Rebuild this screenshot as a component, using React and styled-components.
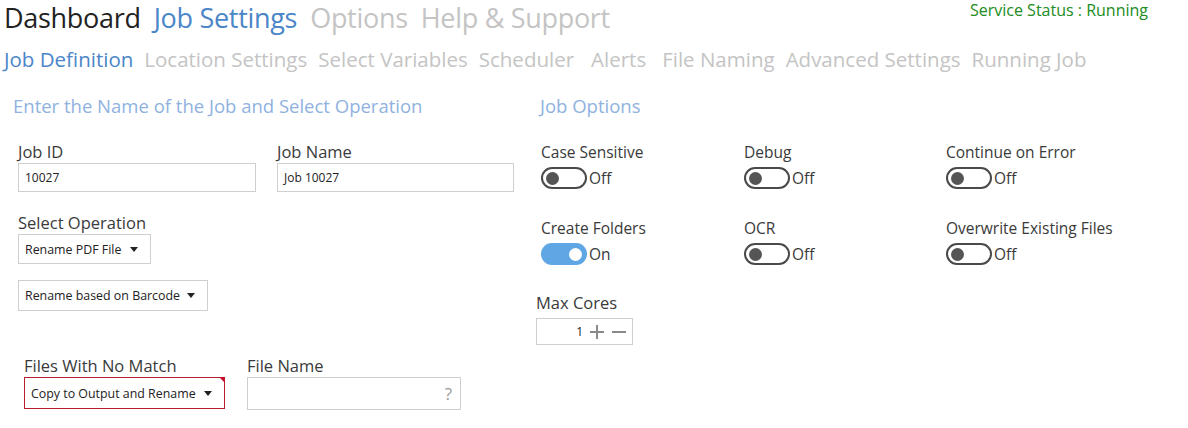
import React from "react";
import styled, { createGlobalStyle } from "styled-components";

const GlobalStyle = createGlobalStyle`
  body {
    margin: 0;
    background: #ffffff;
    font-family: "Open Sans", "Noto Sans", sans-serif;
    color: #333333;
  }
`;

const Page = styled.div`
  width: 1188px;
  height: 428px;
  overflow: hidden;
`;

const Header = styled.div`
  display: flex;
  justify-content: space-between;
  align-items: flex-start;
  height: 40px;
`;

const TopNav = styled.div`
  display: flex;
  gap: 13px;
  padding-left: 4px;
`;

const TopItem = styled.span`
  font-size: 27px;
  line-height: 36px;
  letter-spacing: -0.3px;
  color: ${(p) => (p.active ? "#4a86c8" : p.current ? "#222222" : "#c4c4c4")};
`;

const Status = styled.div`
  color: #218c21;
  font-size: 16px;
  line-height: 20px;
  padding-right: 40px;
`;

const SubNav = styled.div`
  display: flex;
  gap: 11px;
  padding-left: 4px;
  height: 38px;
  align-items: center;
`;

const SubItem = styled.span`
  font-size: 20.5px;
  margin-right: ${(p) => p.extra || 0}px;
  color: ${(p) => (p.active ? "#4a86c8" : "#c4c4c4")};
`;

const Main = styled.div`
  display: flex;
  padding-top: 16px;
`;

const LeftCol = styled.div`
  width: 540px;
  padding-left: 13px;
  box-sizing: border-box;
`;

const RightCol = styled.div`
  flex: 1;
`;

const SectionTitle = styled.div`
  font-size: 18.5px;
  line-height: 24px;
  color: #8fb2e0;
  margin-bottom: ${(p) => p.gap || 0}px;
`;

const FieldRow = styled.div`
  display: flex;
  gap: ${(p) => p.gap || 21}px;
  padding-left: ${(p) => p.indent || 5}px;
  margin-bottom: ${(p) => p.mb || 0}px;
`;

const Field = styled.div`
  display: flex;
  flex-direction: column;
`;

const Label = styled.div`
  font-size: 16.5px;
  line-height: 22px;
  color: #3a3a3a;
`;

const TextBox = styled.div`
  width: ${(p) => p.w}px;
  height: ${(p) => p.h || 29}px;
  box-sizing: border-box;
  border: 1px solid #cfcfcf;
  display: flex;
  align-items: center;
  justify-content: space-between;
  padding: 0 6px;
  font-size: 12px;
  color: #222;
`;

const Help = styled.span`
  font-size: 17px;
  color: #9a9a9a;
  padding-right: 2px;
`;

const Select = styled.div`
  position: relative;
  width: ${(p) => p.w}px;
  height: ${(p) => p.h || 30}px;
  box-sizing: border-box;
  border: 1px solid ${(p) => (p.invalid ? "#b8202e" : "#cfcfcf")};
  display: flex;
  align-items: center;
  justify-content: space-between;
  padding: 0 12px 0 6px;
  font-size: 12.4px;
  color: #222;
  &::after {
    content: "";
    display: ${(p) => (p.invalid ? "block" : "none")};
    position: absolute;
    top: -1px;
    right: -1px;
    border-top: 6px solid #c8102e;
    border-left: 6px solid transparent;
  }
`;

const Caret = styled.span`
  width: 0;
  height: 0;
  border-left: 4px solid transparent;
  border-right: 4px solid transparent;
  border-top: 5px solid #222;
`;

const OptionGrid = styled.div`
  display: grid;
  grid-template-columns: 203px 202px 202px;
  row-gap: 28px;
  padding-left: 1px;
  margin-top: 24px;
`;

const Option = styled.div`
  display: flex;
  flex-direction: column;
`;

const OptLabel = styled.div`
  font-size: 15.5px;
  line-height: 20px;
  color: #3a3a3a;
  margin-bottom: 4px;
`;

const ToggleRow = styled.div`
  display: flex;
  align-items: center;
  gap: 2px;
  height: 24px;
`;

const Track = styled.div`
  width: 46px;
  height: 22px;
  box-sizing: border-box;
  border-radius: 11px;
  border: 2px solid ${(p) => (p.on ? "#5ea6e4" : "#4a4a4a")};
  background: ${(p) => (p.on ? "#5ea6e4" : "#ffffff")};
  display: flex;
  align-items: center;
  justify-content: ${(p) => (p.on ? "flex-end" : "flex-start")};
  padding: 0 3px;
`;

const Knob = styled.div`
  width: 13px;
  height: 13px;
  border-radius: 50%;
  background: ${(p) => (p.on ? "#ffffff" : "#555555")};
`;

const State = styled.span`
  font-size: 15.5px;
  color: #3a3a3a;
`;

const CoresBlock = styled.div`
  margin-top: 26px;
  margin-left: -4px;
`;

const Stepper = styled.div`
  width: 97px;
  height: 27px;
  box-sizing: border-box;
  border: 1px solid #cfcfcf;
  display: flex;
  align-items: center;
  justify-content: flex-end;
  gap: 6px;
  padding-right: 5px;
  margin-top: 4px;
  font-size: 12px;
  color: #222;
`;

const StepBtn = styled.span`
  display: flex;
  align-items: center;
`;

const Toggle = ({ label, on }) => (
  <Option>
    <OptLabel>{label}</OptLabel>
    <ToggleRow>
      <Track on={on ? 1 : 0}>
        <Knob on={on ? 1 : 0} />
      </Track>
      <State>{on ? "On" : "Off"}</State>
    </ToggleRow>
  </Option>
);

const options = [
  { label: "Case Sensitive", on: false },
  { label: "Debug", on: false },
  { label: "Continue on Error", on: false },
  { label: "Create Folders", on: true },
  { label: "OCR", on: false },
  { label: "Overwrite Existing Files", on: false },
];

const App = () => (
  <Page>
    <GlobalStyle />
    <Header>
      <TopNav>
        <TopItem current>Dashboard</TopItem>
        <TopItem active>Job Settings</TopItem>
        <TopItem>Options</TopItem>
        <TopItem>Help &amp; Support</TopItem>
      </TopNav>
      <Status>Service Status : Running</Status>
    </Header>
    <SubNav>
      <SubItem active>Job Definition</SubItem>
      <SubItem>Location Settings</SubItem>
      <SubItem>Select Variables</SubItem>
      <SubItem extra={6}>Scheduler</SubItem>
      <SubItem extra={5}>Alerts</SubItem>
      <SubItem>File Naming</SubItem>
      <SubItem>Advanced Settings</SubItem>
      <SubItem>Running Job</SubItem>
    </SubNav>
    <Main>
      <LeftCol>
        <SectionTitle gap={23}>Enter the Name of the Job and Select Operation</SectionTitle>
        <FieldRow mb={20}>
          <Field>
            <Label>Job ID</Label>
            <TextBox w={238}>10027</TextBox>
          </Field>
          <Field>
            <Label>Job Name</Label>
            <TextBox w={237}>Job 10027</TextBox>
          </Field>
        </FieldRow>
        <FieldRow mb={16}>
          <Field>
            <Label>Select Operation</Label>
            <Select w={133}>
              Rename PDF File
              <Caret />
            </Select>
          </Field>
        </FieldRow>
        <FieldRow mb={44}>
          <Select w={190} h={31}>
            Rename based on Barcode
            <Caret />
          </Select>
        </FieldRow>
        <FieldRow indent={11} gap={22}>
          <Field>
            <Label>Files With No Match</Label>
            <Select w={201} h={32} invalid>
              Copy to Output and Rename
              <Caret />
            </Select>
          </Field>
          <Field>
            <Label>File Name</Label>
            <TextBox w={214} h={33}>
              <span />
              <Help>?</Help>
            </TextBox>
          </Field>
        </FieldRow>
      </LeftCol>
      <RightCol>
        <SectionTitle>Job Options</SectionTitle>
        <OptionGrid>
          {options.map((o) => (
            <Toggle key={o.label} label={o.label} on={o.on} />
          ))}
        </OptionGrid>
        <CoresBlock>
          <Label>Max Cores</Label>
          <Stepper>
            1
            <StepBtn>
              <svg width="16" height="16" viewBox="0 0 16 16">
                <path d="M8 1v14M1 8h14" stroke="#8a8a8a" strokeWidth="2" />
              </svg>
            </StepBtn>
            <StepBtn>
              <svg width="16" height="16" viewBox="0 0 16 16">
                <path d="M1 8h14" stroke="#8a8a8a" strokeWidth="2" />
              </svg>
            </StepBtn>
          </Stepper>
        </CoresBlock>
      </RightCol>
    </Main>
  </Page>
);

export default App;
